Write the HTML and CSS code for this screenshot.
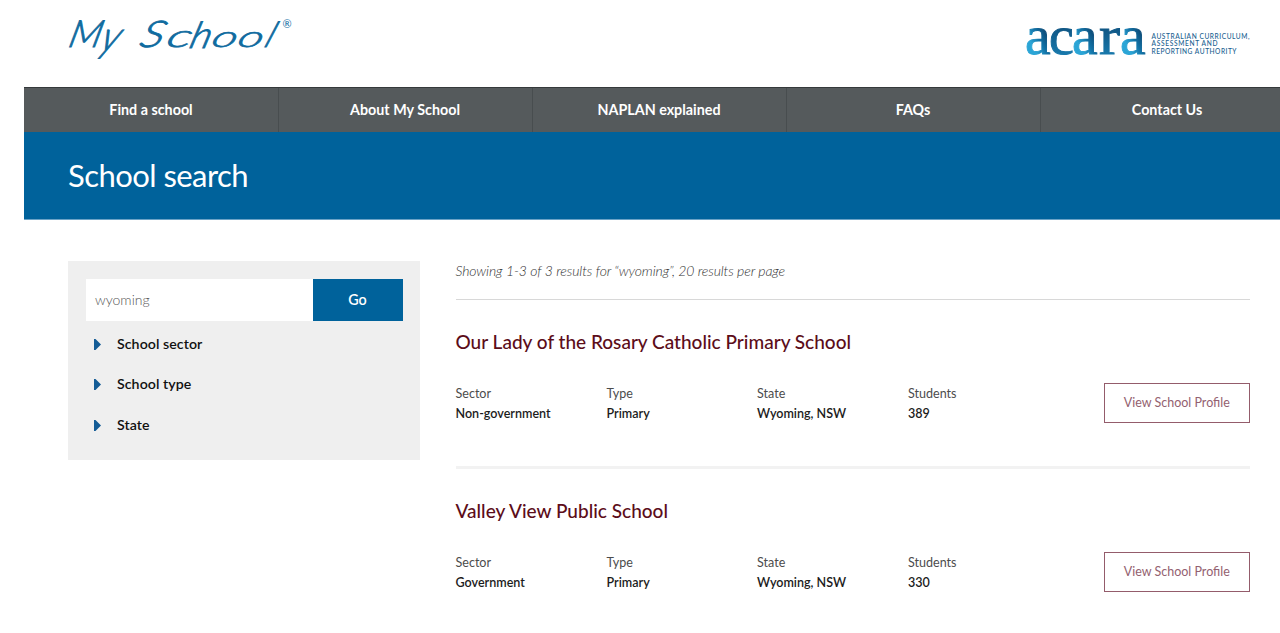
FILE: index.html
```
<!DOCTYPE html>
<html lang="en">
<head>
<meta charset="utf-8">
<title>My School - School search</title>
<link rel="stylesheet" href="styles.css">
</head>
<body>
<header class="header">
  <svg class="logo" viewBox="0 0 230 60" role="img" aria-label="My School">
    <g class="logo-word">
      <text transform="translate(-1 42) skewX(-14) scale(1.08 1.04)">M</text>
      <text transform="translate(30 46) skewX(-20) scale(1.08 1.18)">y</text>
      <text transform="translate(70 42) skewX(-18) scale(1.3 1.02)">S</text>
      <text transform="translate(97 41.5) skewX(-16) scale(1.5 0.88)">c</text>
      <text transform="translate(120 43) skewX(-16) scale(1.12 1.02)">h</text>
      <text transform="translate(142 41.5) skewX(-16) scale(1.38 0.82)">o</text>
      <text transform="translate(168 41.5) skewX(-16) scale(1.38 0.82)">o</text>
      <text transform="translate(195 41.5) skewX(-22) scale(1 0.98)">l</text>
    </g>
    <text class="logo-reg" x="214.5" y="23">®</text>
  </svg>
  <svg class="acara" viewBox="0 0 226 40" role="img" aria-label="acara">
    <defs>
      <linearGradient id="ink" x1="0.65" y1="0.35" x2="0.25" y2="0.85">
        <stop offset="0" stop-color="#0e4f7c"/>
        <stop offset="0.35" stop-color="#1272a6"/>
        <stop offset="0.75" stop-color="#2ba5d6"/>
      </linearGradient>
      <linearGradient id="dark" x1="0" y1="0" x2="0" y2="1">
        <stop offset="0.3" stop-color="#0e4f7c"/>
        <stop offset="0.9" stop-color="#1a7fb3"/>
      </linearGradient>
    </defs>
    <g class="acara-word">
      <text transform="translate(0 31.5) scale(1.05 1)" fill="url(#ink)" stroke="url(#ink)">a</text>
      <text transform="translate(24 31.5) scale(1.02 1)" fill="url(#dark)" stroke="url(#dark)">c</text>
      <text transform="translate(47 31.5) scale(1.05 1)" fill="url(#ink)" stroke="url(#ink)">a</text>
      <text transform="translate(74 31.5) scale(1.15 1)" fill="url(#dark)" stroke="url(#dark)">r</text>
      <text transform="translate(95 31.5) scale(1.05 1)" fill="url(#ink)" stroke="url(#ink)">a</text>
    </g>
    <g class="acara-tag">
      <text x="126.5" y="16.5" textLength="98" lengthAdjust="spacing">AUSTRALIAN CURRICULUM,</text>
      <text x="126.5" y="24.3" textLength="66" lengthAdjust="spacing">ASSESSMENT AND</text>
      <text x="126.5" y="31.8" textLength="85" lengthAdjust="spacing">REPORTING AUTHORITY</text>
    </g>
  </svg>
</header>
<nav class="nav">
  <a class="nav-item">Find a school</a>
  <a class="nav-item">About My School</a>
  <a class="nav-item">NAPLAN explained</a>
  <a class="nav-item">FAQs</a>
  <a class="nav-item">Contact Us</a>
</nav>
<section class="banner"><h1>School search</h1></section>
<main class="main">
  <aside class="filters">
    <form class="search">
      <div class="search-field">wyoming</div>
      <div class="search-go">Go</div>
    </form>
    <ul class="filter-list">
      <li><svg class="arrow" viewBox="0 0 7 11"><path d="M0 0h1.5L7 5.5 1.5 11H0z"/></svg><span>School sector</span></li>
      <li><svg class="arrow" viewBox="0 0 7 11"><path d="M0 0h1.5L7 5.5 1.5 11H0z"/></svg><span>School type</span></li>
      <li><svg class="arrow" viewBox="0 0 7 11"><path d="M0 0h1.5L7 5.5 1.5 11H0z"/></svg><span>State</span></li>
    </ul>
  </aside>
  <div class="results">
    <p class="summary"><span>Showing 1-3 of 3 results for “wyoming”, 20 results per page</span></p>
    <article class="result">
      <h2>Our Lady of the Rosary Catholic Primary School</h2>
      <div class="result-row">
        <dl><dt>Sector</dt><dd>Non-government</dd></dl>
        <dl><dt>Type</dt><dd>Primary</dd></dl>
        <dl><dt>State</dt><dd>Wyoming, NSW</dd></dl>
        <dl><dt>Students</dt><dd>389</dd></dl>
        <a class="profile">View School Profile</a>
      </div>
    </article>
    <article class="result">
      <h2>Valley View Public School</h2>
      <div class="result-row">
        <dl><dt>Sector</dt><dd>Government</dd></dl>
        <dl><dt>Type</dt><dd>Primary</dd></dl>
        <dl><dt>State</dt><dd>Wyoming, NSW</dd></dl>
        <dl><dt>Students</dt><dd>330</dd></dl>
        <a class="profile">View School Profile</a>
      </div>
    </article>
  </div>
</main>
</body>
</html>
```

FILE: styles.css
```
* { box-sizing: border-box; margin: 0; padding: 0; }
html, body { overflow: hidden; }
body { height: 633px; background: #fff; font-family: Lato, sans-serif; color: #222; }

.header { height: 87px; display: flex; justify-content: space-between; padding: 5px 29px 0 68px; }
.logo { width: 230px; height: 60px; overflow: visible; }
.logo-word { fill: #0f6b9f; stroke: #0f6b9f; stroke-width: 0.8; font-size: 36px; font-weight: 300; font-style: italic; }
.logo-reg { font-size: 11px; fill: #0f6b9f; }
.acara { width: 226px; height: 40px; margin-top: 17px; overflow: visible; }
.acara-word { font: 400 55px "Liberation Serif", serif; stroke-width: 0.9; }
.acara-tag { font: 500 6.6px Lato, sans-serif; fill: #17608f; }

.nav { margin-left: 24px; width: 1270px; height: 45px; display: grid; grid-template-columns: repeat(5, 254px); background: #555a5c; border-top: 1px solid #35393b; }
.nav-item { display: flex; align-items: center; justify-content: center; color: #fff; font-size: 14.3px; font-weight: 700; line-height: 20px; padding-bottom: 1px; box-shadow: 1px 0 #484d4f; }

.banner { margin-left: 24px; height: 88px; background: #00629b; border-bottom: 1px solid #6ca3c6; padding: 21px 44px 0; }
.banner h1 { color: #fff; font-size: 31px; letter-spacing: -0.55px; line-height: 44px; font-weight: 400; }

.main { display: flex; gap: 35.5px; padding: 41px 30px 0 68px; }
.filters { width: 352px; height: 199px; background: #efefef; padding: 18px; }
.search { display: flex; width: 316.5px; height: 41.5px; }
.search-field { flex: 1; background: #fff; padding-left: 9px; font-size: 14px; line-height: 42px; font-weight: 300; color: #555; }
.search-go { width: 90px; background: #00629b; color: #fff; text-align: center; font-size: 14.3px; line-height: 41px; font-weight: 600; }
.filter-list { list-style: none; padding: 2.5px 0 0 8px; }
.filter-list li { display: flex; align-items: center; gap: 16px; height: 40.5px; font-size: 14.2px; letter-spacing: 0.05px; font-weight: 600; color: #111; }
.arrow { width: 7px; height: 11px; margin-top: 2px; fill: #145c96; }

.results { width: 794.5px; }
.summary { height: 39px; border-bottom: 1px solid #d8d8d8; font-size: 14px; letter-spacing: -0.1px; line-height: 20px; font-style: italic; font-weight: 300; color: #333; }
.result { height: 169px; padding-top: 26px; border-bottom: 3px solid #f2f2f2; }
.result + .result { border-bottom: 0; }
.result h2 { font-size: 19.03px; line-height: 32px; font-weight: 500; color: #5c0d19; }
.result-row { display: grid; grid-template-columns: 151px 150.5px 151px 196px 145.5px; margin-top: 25px; }
.result-row dl { font-size: 12.55px; line-height: 20px; padding-top: 1px; }
.result-row dt { color: #4c4c4c; }
.result-row dd { font-weight: 600; color: #1c1c1c; }
.profile { height: 40px; border: 1px solid #945c6b; color: #936170; text-align: center; font-size: 12.5px; line-height: 38px; }
```
